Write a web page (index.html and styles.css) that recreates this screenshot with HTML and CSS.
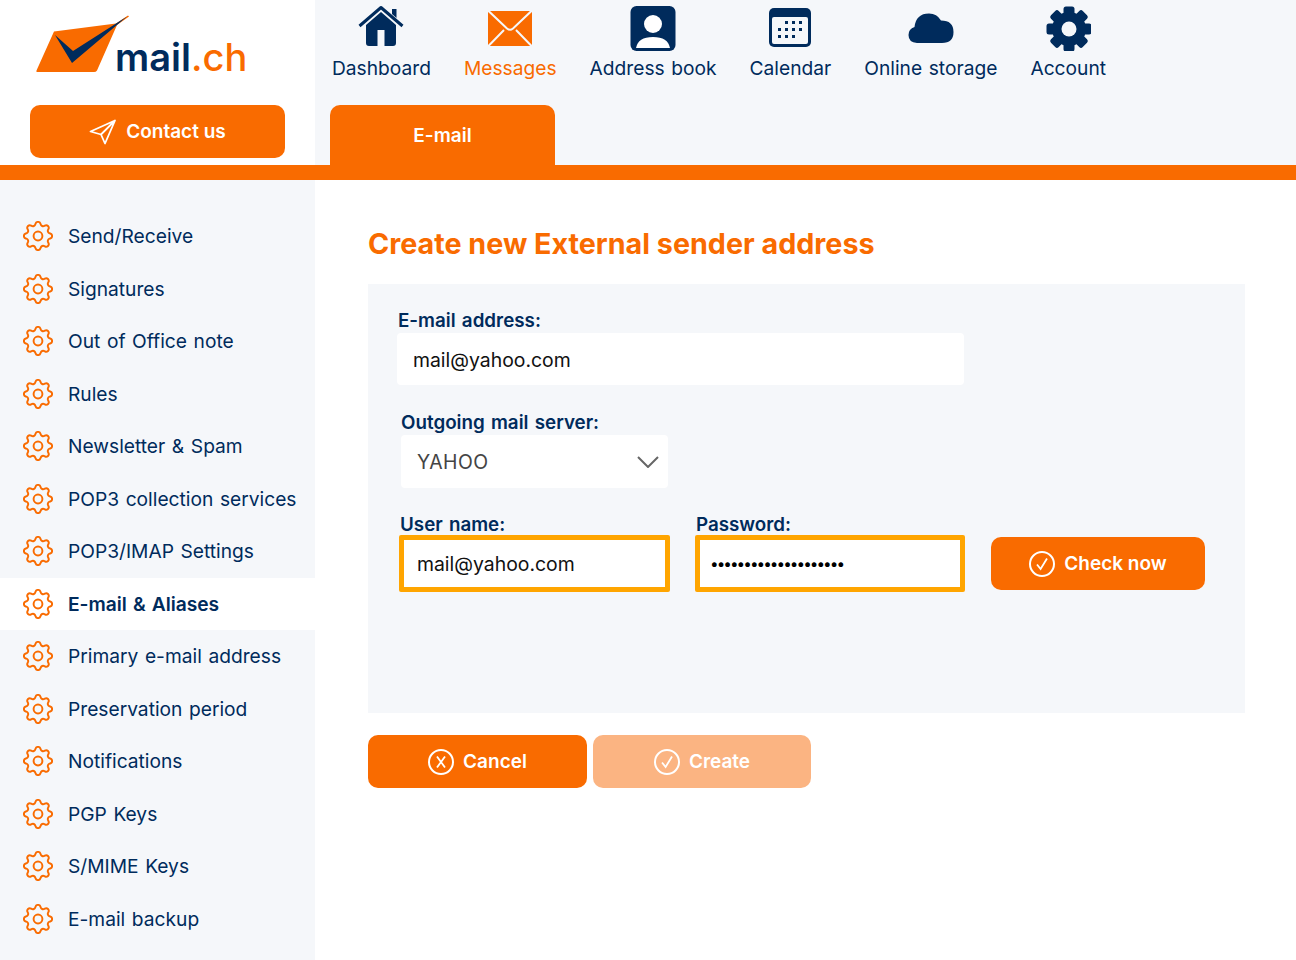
FILE: index.html
```html
<!DOCTYPE html>
<html lang="en">
<head>
  <meta charset="UTF-8" />
  <meta name="viewport" content="width=device-width, initial-scale=1.0"/>
  <title>mail.ch</title>
  <link rel="stylesheet" href="styles.css">
</head>
<body>
  <svg class="defs" width="0" height="0">
    <symbol id="gear" viewBox="-0.5 -0.5 17 17">
      <path fill="none" stroke="#f96b00" stroke-width="1.1" d="M9.405 1.05c-.413-1.4-2.397-1.4-2.81 0l-.1.34a1.464 1.464 0 0 1-2.105.872l-.31-.17c-1.283-.698-2.686.705-1.987 1.987l.169.311c.446.82.023 1.841-.872 2.105l-.34.1c-1.4.413-1.4 2.397 0 2.81l.34.1a1.464 1.464 0 0 1 .872 2.105l-.17.31c-.698 1.283.705 2.686 1.987 1.987l.311-.169a1.464 1.464 0 0 1 2.105.872l.1.34c.413 1.4 2.397 1.4 2.81 0l.1-.34a1.464 1.464 0 0 1 2.105-.872l.31.17c1.283.698 2.686-.705 1.987-1.987l-.169-.311a1.464 1.464 0 0 1 .872-2.105l.34-.1c1.4-.413 1.4-2.397 0-2.81l-.34-.1a1.464 1.464 0 0 1-.872-2.105l.17-.31c.698-1.283-.705-2.686-1.987-1.987l-.311.169a1.464 1.464 0 0 1-2.105-.872l-.1-.34z"/>
      <circle cx="8" cy="8" r="2.5" fill="none" stroke="#f96b00" stroke-width="1.1"/>
    </symbol>
    <symbol id="check" viewBox="0 0 26 26">
      <circle cx="13" cy="13" r="12" fill="none" stroke="#fff" stroke-width="2"/>
      <path d="M8 13.500l3.600 4.500L18 7.500" fill="none" stroke="#fff" stroke-width="1.800"/>
    </symbol>
  </svg>

  <header class="top">
    <div class="brand">
      <div class="logo">
        <svg class="logo-mark" width="93" height="58" viewBox="0 0 93 58">
          <path fill="#f96b00" d="M18 16.500L80 8.500L92 0.500L93 1.500L81 10L61 55.500Q60 57 58 57H1Q0 57 0.500 55.500z"/>
          <path fill="#002b5c" d="M19 20L37 36L91 1.500L36 48z"/>
        </svg>
        <span class="logo-text">mail<span class="logo-dot">.ch</span></span>
      </div>
      <button class="btn btn-contact">
        <svg width="28" height="26" viewBox="0 0 28 26"><path d="M1.500 12.500L26 1.500L16 24.500L12 15.500zM12 15.500L26 1.500" fill="none" stroke="#fff" stroke-width="1.800" stroke-linejoin="round"/></svg>
        Contact us
      </button>
    </div>
    <div class="top-right">
      <nav class="main-nav">
        <a class="nav-item">
          <svg width="46" height="46" viewBox="0 0 46 46">
            <path fill="#002b5c" d="M8 20L23 7L38 20V38Q38 41 35 41H11Q8 41 8 38zM19.500 25V41H26.500V25z" fill-rule="evenodd"/>
            <path fill="none" stroke="#002b5c" stroke-width="3" stroke-linejoin="round" d="M1.500 21L23 2.500L44.500 21"/>
            <path fill="#002b5c" d="M34 4H38.500V13L34 9z"/>
          </svg>
          <span>Dashboard</span>
        </a>
        <a class="nav-item active">
          <svg width="46" height="46" viewBox="0 0 46 46">
            <path fill="#f96b00" d="M1 6H45V41H1z"/>
            <path fill="none" stroke="#f5f7fa" stroke-width="2" d="M0 4.500L20 23.500Q23 26 26 23.500L46 4.500M0 42.500L17 25M46 42.500L29 25"/>
          </svg>
          <span>Messages</span>
        </a>
        <a class="nav-item">
          <svg width="46" height="46" viewBox="0 0 46 46">
            <rect x="0.500" y="1" width="45" height="45" rx="6" fill="#002b5c"/>
            <circle cx="23" cy="19" r="9" fill="#fff"/>
            <path fill="#fff" d="M6 43Q8 32 23 32Q38 32 40 43z"/>
          </svg>
          <span>Address book</span>
        </a>
        <a class="nav-item">
          <svg width="44" height="46" viewBox="0 0 44 46">
            <rect x="1" y="3" width="42" height="39" rx="5" fill="#002b5c"/>
            <rect x="4" y="12" width="36" height="27" rx="2" fill="#f5f7fa"/>
            <g fill="#002b5c">
              <rect x="17" y="16" width="3" height="3"/><rect x="24" y="16" width="3" height="3"/><rect x="31" y="16" width="3" height="3"/>
              <rect x="10" y="23" width="3" height="3"/><rect x="17" y="23" width="3" height="3"/><rect x="24" y="23" width="3" height="3"/><rect x="31" y="23" width="3" height="3"/>
              <rect x="10" y="30" width="3" height="3"/><rect x="17" y="30" width="3" height="3"/><rect x="24" y="30" width="3" height="3"/>
            </g>
          </svg>
          <span>Calendar</span>
        </a>
        <a class="nav-item">
          <svg width="46" height="46" viewBox="0 0 46 46">
            <path fill="#002b5c" d="M9 38Q0.500 37.500 0.500 30Q0.500 24 6.500 22Q8 8.500 21 8.500Q29 8.500 33 15.500Q45.500 15.500 45.500 27Q45.500 38 34 38z"/>
          </svg>
          <span>Online storage</span>
        </a>
        <a class="nav-item">
          <svg width="46" height="46" viewBox="-1 0 46 46">
            <g fill="#002b5c">
              <circle cx="23" cy="24" r="17"/>
              <rect x="17.500" y="1.500" width="11" height="45" rx="2.500"/>
              <rect x="17.500" y="1.500" width="11" height="45" rx="2.500" transform="rotate(45 23 24)"/>
              <rect x="17.500" y="1.500" width="11" height="45" rx="2.500" transform="rotate(90 23 24)"/>
              <rect x="17.500" y="1.500" width="11" height="45" rx="2.500" transform="rotate(135 23 24)"/>
            </g>
            <circle cx="23" cy="24" r="7.500" fill="#f5f7fa"/>
          </svg>
          <span>Account</span>
        </a>
      </nav>
      <div class="tabs">
        <a class="tab">E-mail</a>
      </div>
    </div>
  </header>
  <div class="orange-bar"></div>

  <div class="layout">
    <aside class="sidebar">
      <a class="side-item"><svg class="gear"><use href="#gear"/></svg>Send/Receive</a>
      <a class="side-item"><svg class="gear"><use href="#gear"/></svg>Signatures</a>
      <a class="side-item"><svg class="gear"><use href="#gear"/></svg>Out of Office note</a>
      <a class="side-item"><svg class="gear"><use href="#gear"/></svg>Rules</a>
      <a class="side-item"><svg class="gear"><use href="#gear"/></svg>Newsletter &amp; Spam</a>
      <a class="side-item"><svg class="gear"><use href="#gear"/></svg>POP3 collection services</a>
      <a class="side-item"><svg class="gear"><use href="#gear"/></svg>POP3/IMAP Settings</a>
      <a class="side-item current"><svg class="gear"><use href="#gear"/></svg>E-mail &amp; Aliases</a>
      <a class="side-item"><svg class="gear"><use href="#gear"/></svg>Primary e-mail address</a>
      <a class="side-item"><svg class="gear"><use href="#gear"/></svg>Preservation period</a>
      <a class="side-item"><svg class="gear"><use href="#gear"/></svg>Notifications</a>
      <a class="side-item"><svg class="gear"><use href="#gear"/></svg>PGP Keys</a>
      <a class="side-item"><svg class="gear"><use href="#gear"/></svg>S/MIME Keys</a>
      <a class="side-item"><svg class="gear"><use href="#gear"/></svg>E-mail backup</a>
    </aside>

    <main class="content">
      <h1>Create new External sender address</h1>
      <form class="panel">
        <div class="field field-email">
          <label>E-mail address:</label>
          <input class="input" type="text" value="mail@yahoo.com">
        </div>
        <div class="field field-server">
          <label>Outgoing mail server:</label>
          <div class="select-wrap">
            <select class="input select"><option>YAHOO</option></select>
            <svg class="chevron" width="22" height="12" viewBox="0 0 22 12"><path d="M1 1l10 10L21 1" fill="none" stroke="#666" stroke-width="2"/></svg>
          </div>
        </div>
        <div class="check-row">
          <div class="field field-user">
            <label>User name:</label>
            <input class="input warn" type="text" value="mail@yahoo.com">
          </div>
          <div class="field field-pass">
            <label>Password:</label>
            <input class="input warn pass" type="password" value="aaaaaaaaaaaaaaaaaaaa">
          </div>
          <button type="button" class="btn btn-check"><svg width="26" height="26"><use href="#check"/></svg>Check now</button>
        </div>
      </form>
      <div class="actions">
        <button class="btn btn-cancel">
          <svg width="26" height="26" viewBox="0 0 26 26"><circle cx="13" cy="13" r="12" fill="none" stroke="#fff" stroke-width="2"/><path d="M9 7.500l8 11M17 7.500L9 18.500" stroke="#fff" stroke-width="1.800"/></svg>
          Cancel
        </button>
        <button class="btn btn-create"><svg width="26" height="26"><use href="#check"/></svg>Create</button>
      </div>
    </main>
  </div>
</body>
</html>
```

FILE: styles.css
```css
* {
  box-sizing: border-box;
}
body {
  font-family: Inter, 'Noto Sans', sans-serif;
  font-size: 19.2px;
  word-spacing: 1.2px;
  color: #002b5c;
  background: #fff;
  margin: 0;
}
a {
  color: inherit;
  text-decoration: none;
}
.defs {
  position: absolute;
}
.top {
  display: flex;
  height: 165px;
}
.brand {
  width: 315px;
  flex-shrink: 0;
  padding: 15px 30px 0;
}
.logo {
  display: flex;
  align-items: flex-end;
  height: 58px;
  margin-left: 6px;
}
.logo-mark {
  flex-shrink: 0;
}
.logo-text {
  margin-left: -14px;
  margin-bottom: -7px;
  font-size: 38px;
  font-weight: 600;
  line-height: 46px;
  color: #002b5c;
}
.logo-dot {
  color: #f96b00;
  font-weight: 500;
}
.btn {
  display: flex;
  align-items: center;
  justify-content: center;
  gap: 9px;
  height: 53px;
  border: none;
  border-radius: 10px;
  background: #f96b00;
  color: #fff;
  font-family: inherit;
  font-size: 19px;
  font-weight: 600;
  cursor: pointer;
}
.btn-contact {
  width: 255px;
  margin-top: 32px;
}
.top-right {
  flex: 1;
  background: #f5f7fa;
  padding-left: 15px;
}
.main-nav {
  display: flex;
  gap: 33px;
  height: 105px;
  padding-left: 2px;
}
.nav-item {
  display: flex;
  flex-direction: column;
  align-items: center;
  height: 80px;
  justify-content: flex-end;
  line-height: 24px;
}
.nav-item svg {
  margin-bottom: 5px;
}
.nav-item.active {
  color: #f96b00;
}
.tabs {
  display: flex;
}
.tab {
  width: 225px;
  height: 60px;
  padding-top: 19px;
  text-align: center;
  background: #f96b00;
  color: #fff;
  font-size: 19px;
  font-weight: 600;
  border-radius: 10px 10px 0 0;
}
.orange-bar {
  height: 15px;
  background: #f96b00;
}
.layout {
  display: flex;
}
.sidebar {
  width: 315px;
  flex-shrink: 0;
  height: 780px;
  padding-top: 30px;
  background: #f5f7fa;
}
.side-item {
  display: flex;
  align-items: center;
  gap: 15px;
  height: 52.5px;
  padding-left: 23px;
}
.side-item.current {
  background: #fff;
  font-weight: 600;
}
.gear {
  width: 30px;
  height: 30px;
  flex-shrink: 0;
}
.content {
  flex: 1;
  padding: 46px 51px 0 53px;
}
h1 {
  margin: 0 0 23px;
  font-size: 28.7px;
  line-height: 35px;
  font-weight: 700;
  word-spacing: 0;
  color: #f96b00;
}
.panel {
  height: 429px;
  padding-top: 25px;
  background: #f5f7fa;
}
.field {
  display: flex;
  flex-direction: column;
}
.field label {
  height: 24px;
  line-height: 24px;
  font-size: 18.8px;
  font-weight: 600;
  word-spacing: 1.5px;
}
.input {
  height: 52px;
  padding: 2px 16px 0;
  border: none;
  border-radius: 4px;
  background: #fff;
  color: #111;
  font-family: inherit;
  font-size: 19.4px;
  outline: none;
}
.field-email {
  width: 567px;
  margin-left: 29px;
}
.field-email label {
  padding-left: 1px;
}
.field-server {
  width: 267px;
  margin: 26px 0 0 33px;
}
.select-wrap {
  position: relative;
}
.select {
  width: 100%;
  height: 53px;
  padding-top: 0;
  appearance: none;
  color: #444;
  letter-spacing: 0.5px;
}
.chevron {
  position: absolute;
  right: 9px;
  top: 21px;
  pointer-events: none;
}
.check-row {
  display: flex;
  align-items: flex-end;
  margin: 25px 0 0 31px;
}
.field-user {
  width: 271px;
}
.field-pass {
  width: 270px;
  margin-left: 25px;
}
.field-user label,
.field-pass label {
  height: 22px;
  line-height: 24px;
  padding-left: 1px;
}
.warn {
  height: 57px;
  padding: 0 13px;
  border: 5px solid #ffa500;
  border-radius: 2px;
}
.pass {
  padding-left: 11px;
  font-size: 15.2px;
  font-weight: 800;
  color: #000;
}
.btn-check {
  width: 214px;
  margin: 0 0 2px 26px;
}
.actions {
  display: flex;
  gap: 6px;
  margin-top: 22px;
}
.btn-cancel {
  width: 219px;
}
.btn-create {
  width: 218px;
  background: #fbb482;
}
```
